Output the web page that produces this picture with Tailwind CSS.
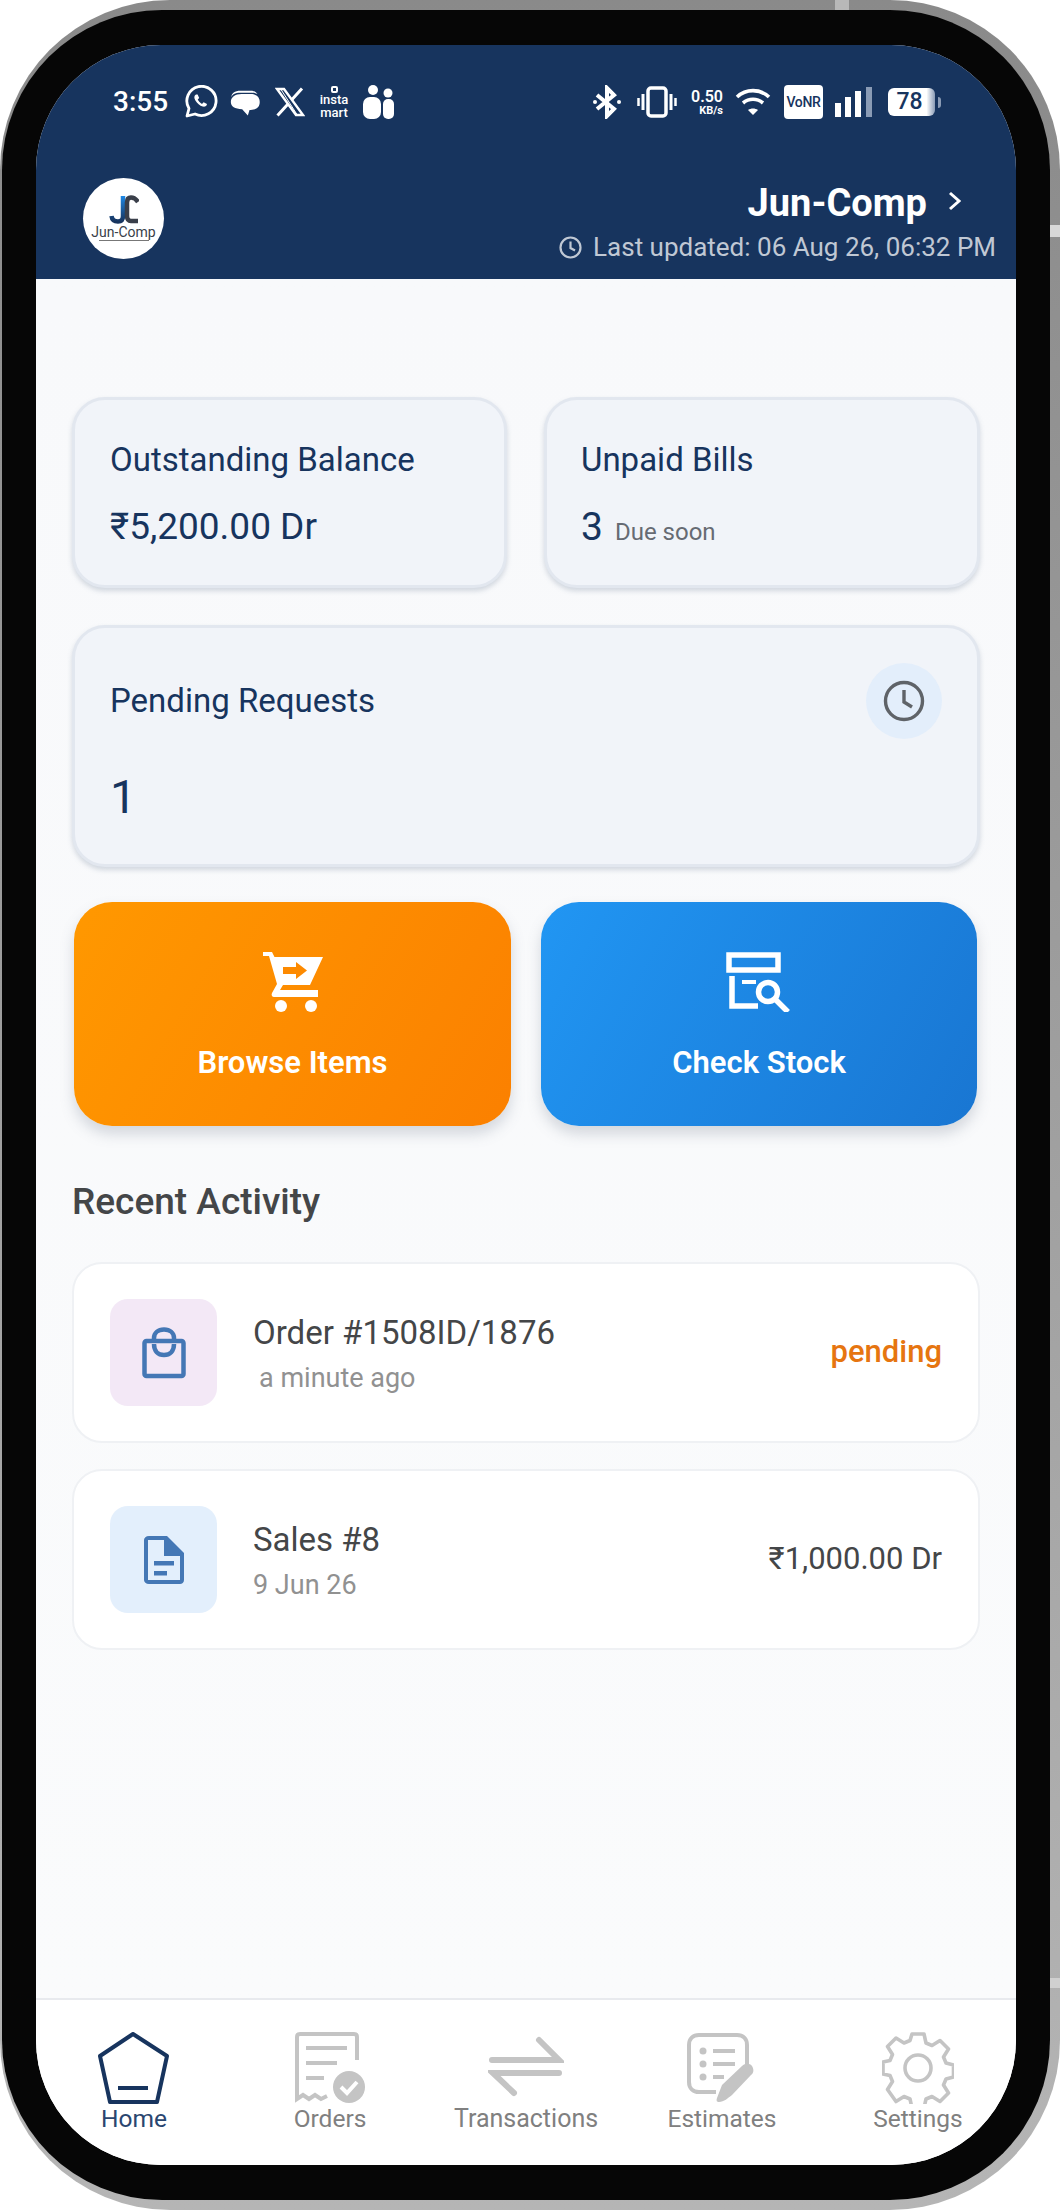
<!DOCTYPE html>
<html lang="en">
<head>
    <meta charset="UTF-8">
    <meta name="viewport" content="width=device-width, initial-scale=1.0">
    <title>Jun-Comp</title>
    <script src="https://cdn.jsdelivr.net/npm/@tailwindcss/browser@4"></script>
</head>
<body class="bg-white font-['Roboto','Noto_Sans',sans-serif]">
    <div class="w-[1060px] h-[2210px] overflow-hidden bg-white">
        <!-- Phone frame -->
        <div class="relative w-[1060px] h-[2210px] rounded-[170px] bg-gradient-to-b from-[#8a8a8a] to-[#b5b5b5] pt-[10px] pr-[10px] pb-[10px] pl-[2px]">
            <span class="absolute top-0 left-[835px] w-[14px] h-[10px] bg-[#b8b8b8]"></span>
            <span class="absolute top-[225px] right-0 w-[10px] h-[12px] bg-[#d8d8d8]"></span>
            <span class="absolute top-[1978px] right-0 w-[10px] h-[10px] bg-[#d0d0d0]"></span>
            <div class="w-full h-full rounded-[160px] bg-[#060606] py-[35px] pl-[34px] pr-[34px]">
                <div class="w-[980px] h-[2120px] rounded-[125px] overflow-hidden bg-[#f8f9fb] flex flex-col">

                    <!-- Header -->
                    <header class="h-[234px] shrink-0 bg-[#17345e] text-white">
                        <div class="pt-[37px] pl-[77px] pr-[75px]">
                            <div class="h-[40px] flex items-center justify-between">
                                <div class="flex items-center">
                                    <span class="text-[28px] font-medium leading-none w-[71px]">3:55</span>
                                    <svg class="w-[34px] h-[34px]" viewBox="0 0 34 34" fill="none" stroke="white" stroke-width="2.8"><path d="M3 31l2-7.500A14.600 14.600 0 1 1 11 29z" stroke-linejoin="round"/><path d="M12 9.500c-2 1-2.200 3.400-.6 6 1.700 2.900 4.500 5.400 7.300 6.100 2.300.5 4-.6 4.300-2.600l-3.400-1.800-1.600 1.700c-1.800-.8-3.400-2.400-4.300-4.300l1.500-1.500-1.600-3.600z" fill="white" stroke="none"/></svg>
                                    <svg class="w-[34px] h-[34px] ml-[10px]" viewBox="0 0 30 30" fill="white"><path d="M3 11c0-4 3-6 8-6h9c3 0 5 1 6 3-1-.8-3-1.200-6-1.200h-9C6 6.800 3.500 8.500 3 11z"/><path d="M12 8h8c5 0 8 2.500 8 7s-3 7-8 7h-1l-1.500 5-5-5.500C6 21 2.500 19 2.500 15S6 8 12 8z"/></svg>
                                    <svg class="w-[30px] h-[30px] ml-[13px]" viewBox="0 0 30 30" fill="none" stroke="white"><path d="M2 2h7l19 26h-7z" stroke-width="2.400"/><path d="M6 2.500l16 25" stroke-width="1"/><path d="M27 1.500L17 12.500M13 17L2.500 28.500" stroke-width="3"/></svg>
                                    <div class="w-[32px] ml-[13px] flex flex-col items-center leading-none">
                                        <span class="w-[7px] h-[7px] border-2 border-white rounded-[2px]"></span>
                                        <span class="text-[13px] leading-[13px] font-medium">insta</span>
                                        <span class="text-[13px] leading-[13px] font-medium">mart</span>
                                    </div>
                                    <svg class="w-[32px] h-[36px] ml-[13px]" viewBox="0 0 32 36" fill="white"><circle cx="10" cy="6" r="5"/><circle cx="25" cy="9" r="4.500"/><rect x="0" y="13" width="18" height="22" rx="7"/><rect x="20" y="15" width="11" height="20" rx="5"/></svg>
                                </div>
                                <div class="flex items-center">
                                    <svg class="w-[30px] h-[34px]" viewBox="0 0 30 34" fill="none" stroke="white" stroke-width="4"><path d="M5 10l17 14-7 7V3l7 7L5 24"/><circle cx="3" cy="17" r="2" fill="white" stroke="none"/><circle cx="27" cy="17" r="2" fill="white" stroke="none"/></svg>
                                    <svg class="w-[40px] h-[32px] ml-[15px]" viewBox="0 0 40 32" fill="none" stroke="white"><rect x="11" y="2" width="18" height="28" rx="3" stroke-width="3.500"/><path d="M6 8v16M34 8v16" stroke-width="3"/><path d="M1.500 12v8M38.500 12v8" stroke-width="2.500"/></svg>
                                    <div class="w-[34px] ml-[12px] flex flex-col items-end leading-none">
                                        <span class="text-[16px] leading-[17px] font-semibold">0.50</span>
                                        <span class="text-[11px] leading-[12px] font-bold">KB/s</span>
                                    </div>
                                    <svg class="w-[36px] h-[28px] ml-[12px]" viewBox="0 0 36 28" fill="none" stroke="white" stroke-width="3.600"><path d="M2 9c9-8.500 23-8.500 32 0"/><path d="M8 15c6-5 14-5 20 0"/><path d="M18 27l-5-5c3-2 7-2 10 0z" fill="white" stroke="none"/></svg>
                                    <span class="ml-[13px] w-[39px] h-[34px] rounded-[4px] bg-white text-[#17345e] text-[14px] font-medium flex items-center justify-center tracking-tight">VoNR</span>
                                    <svg class="w-[37px] h-[30px] ml-[12px]" viewBox="0 0 37 30"><rect x="0" y="16" width="6" height="14" fill="white"/><rect x="10" y="10" width="6" height="20" fill="white"/><rect x="20" y="4" width="6" height="26" fill="white"/><rect x="31" y="0" width="6" height="30" fill="#8a9bb5"/></svg>
                                    <div class="ml-[16px] flex items-center">
                                        <span class="w-[47px] h-[28px] rounded-[6px] bg-gradient-to-r from-white from-[82%] to-[#8a9bb5] text-[#17345e] text-[23px] font-medium flex items-center justify-center pr-[4px]">78</span>
                                        <span class="ml-[3px] w-[3px] h-[11px] rounded-r-sm bg-[#8a9bb5]"></span>
                                    </div>
                                </div>
                            </div>
                        </div>
                        <div class="mt-[56px] pl-[47px] pr-[20px] flex justify-between items-start">
                            <div class="w-[81px] h-[81px] rounded-full bg-white flex flex-col items-center pt-[17px]">
                                <svg class="w-[30px] h-[29px]" viewBox="0 0 30 29" fill="none" stroke-width="4.500">
                                    <defs>
                                        <linearGradient id="jGrad" x1="0" y1="0" x2="0" y2="1">
                                            <stop offset="0" stop-color="#1e88e5"/>
                                            <stop offset="1" stop-color="#17345e"/>
                                        </linearGradient>
                                    </defs>
                                    <path d="M14 1v20c0 4-2 5.500-5 5.500S3 25 2.500 21" stroke="url(#jGrad)"/>
                                    <path d="M29 7c-2-3-4-4.500-7-4.500-3 0-4 2-4 5v13c0 3 1 5.500 4 5.500h7" stroke="#3a3f4a"/>
                                </svg>
                                <span class="text-[14px] leading-[14px] text-[#3a3f4a] mt-[1px]">Jun-Comp</span>
                                <span class="w-[50px] h-[1px] bg-[#777] mt-[1px]"></span>
                            </div>
                            <div class="flex flex-col items-end pt-[3px]">
                                <div class="flex items-center h-[44px] pr-[34px]">
                                    <span class="text-[38px] font-bold leading-[44px]">Jun-Comp</span>
                                    <svg class="w-[14px] h-[20px] ml-[21px] -mt-[4px]" viewBox="0 0 14 20" fill="none" stroke="white" stroke-width="3"><path d="M2 2l9 8-9 8"/></svg>
                                </div>
                                <div class="flex items-center mt-[7px] text-[#c0c8d4]">
                                    <svg class="w-[23px] h-[23px] mr-[11px]" viewBox="0 0 23 23" fill="none" stroke="#c0c8d4" stroke-width="2.200"><circle cx="11.500" cy="11.500" r="10"/><path d="M11.500 5.500v6.500l4.500 2.500"/></svg>
                                    <span class="text-[26px] leading-[30px]">Last updated: 06 Aug 26, 06:32 PM</span>
                                </div>
                            </div>
                        </div>
                    </header>

                    <!-- Main -->
                    <main class="flex-1 px-[36px] pt-[118px] bg-gradient-to-b from-[#f8f9fb] to-[#fafbfc]">
                        <div class="grid grid-cols-[435px_436px] gap-[37px]">
                            <div class="h-[191px] rounded-[33px] bg-[#f1f4f9] border-[3px] border-[#e2e7ef] shadow-[0_3px_5px_rgba(120,135,160,0.3)] pl-[35px] pt-[41px]">
                                <p class="text-[33px] leading-[38px] text-[#17345e]">Outstanding Balance</p>
                                <p class="text-[37px] leading-[44px] mt-[26px] text-[#17345e]">₹5,200.00 Dr</p>
                            </div>
                            <div class="h-[191px] rounded-[33px] bg-[#f1f4f9] border-[3px] border-[#e2e7ef] shadow-[0_3px_5px_rgba(120,135,160,0.3)] pl-[34px] pt-[41px]">
                                <p class="text-[33px] leading-[38px] text-[#17345e]">Unpaid Bills</p>
                                <p class="h-[44px] mt-[26px] flex items-baseline">
                                    <span class="text-[39px] leading-[44px] text-[#17345e]">3</span>
                                    <span class="text-[24px] ml-[12px] text-[#666b73]">Due soon</span>
                                </p>
                            </div>
                        </div>
                        <div class="h-[242px] mt-[37px] rounded-[33px] bg-[#f1f4f9] border-[3px] border-[#e2e7ef] shadow-[0_3px_5px_rgba(120,135,160,0.3)] pl-[35px] pr-[35px] pt-[35px]">
                            <div class="flex items-center justify-between h-[76px]">
                                <p class="text-[33px] leading-[38px] text-[#17345e]">Pending Requests</p>
                                <div class="w-[76px] h-[76px] rounded-full bg-[#e3eefb] flex items-center justify-center">
                                    <svg class="w-[42px] h-[42px]" viewBox="0 0 42 42" fill="none" stroke="#5f6368" stroke-width="3.400"><circle cx="21" cy="21" r="18.500"/><path d="M21 10v12l8 5"/></svg>
                                </div>
                            </div>
                            <p class="text-[47px] leading-[48px] mt-[34px] text-[#17345e]">1</p>
                        </div>

                        <!-- Quick actions -->
                        <div class="ml-[2px] mt-[35px] grid grid-cols-[437px_436px] gap-[30px]">
                            <button class="h-[224px] rounded-[38px] bg-linear-120 from-[#ff9800] to-[#fb8000] shadow-[0_8px_14px_rgba(100,110,130,0.25)] text-white flex flex-col items-center pt-[50px]">
                                <svg class="w-[60px] h-[60px]" viewBox="0 0 60 60"><path d="M0 0h9l2.500 5H60L47 33H20l-3 5h38v7H11c-2 0-3-2-2-4l5-9L6 4H0z" fill="white"/><path d="M20 15h13v-5l11 8.500L33 27v-5H20z" fill="#fd8a00"/><circle cx="18" cy="54" r="6" fill="white"/><circle cx="48" cy="54" r="6" fill="white"/></svg>
                                <span class="text-[31px] font-semibold leading-[34px] mt-[34px]">Browse Items</span>
                            </button>
                            <button class="h-[224px] rounded-[38px] bg-linear-120 from-[#2196f3] to-[#1976d2] shadow-[0_8px_14px_rgba(100,110,130,0.25)] text-white flex flex-col items-center pt-[50px]">
                                <svg class="w-[66px] h-[60px]" viewBox="0 0 66 60" fill="none" stroke="white" stroke-width="5.500"><rect x="3" y="3" width="49" height="15"/><path d="M6 24v30h26"/><path d="M16 30h14" stroke-width="4"/><circle cx="42" cy="40" r="9.500"/><path d="M49 47l13 13"/></svg>
                                <span class="text-[31px] font-semibold leading-[34px] mt-[34px]">Check Stock</span>
                            </button>
                        </div>

                        <!-- Recent activity -->
                        <h2 class="text-[37px] font-medium leading-[40px] text-[#444648] mt-[56px]">Recent Activity</h2>
                        <div class="mt-[40px] h-[181px] rounded-[30px] bg-white border-2 border-[#eff1f4] flex items-center pl-[36px] pr-[36px]">
                            <div class="w-[107px] h-[107px] rounded-[18px] bg-[#f3e8f6] flex items-center justify-center">
                                <svg class="w-[44px] h-[52px]" viewBox="0 0 44 52" fill="none" stroke="#4477b5" stroke-width="4.500"><rect x="2.500" y="14" width="39" height="35" rx="2"/><path d="M12 14V11c0-5 4-8.500 10-8.500S32 6 32 11v3"/><path d="M12 17c0 7 4 11 10 11s10-4 10-11"/></svg>
                            </div>
                            <div class="ml-[36px] flex-1">
                                <p class="text-[33px] leading-[40px] text-[#444648]">Order #1508ID/1876</p>
                                <p class="text-[27px] leading-[30px] mt-[10px] pl-[6px] text-[#919191]">a minute ago</p>
                            </div>
                            <span class="text-[31px] font-medium text-[#e67510]">pending</span>
                        </div>
                        <div class="mt-[26px] h-[181px] rounded-[30px] bg-white border-2 border-[#eff1f4] flex items-center pl-[36px] pr-[36px]">
                            <div class="w-[107px] h-[107px] rounded-[18px] bg-[#e3effc] flex items-center justify-center">
                                <svg class="w-[40px] h-[48px]" viewBox="0 0 40 48" fill="#4477b5"><path fill-rule="evenodd" d="M5 0h18l17 17v27c0 2.500-2 4-4 4H5c-3 0-5-2-5-4V4c0-2 2-4 5-4zm-1 4v40h32V20H20V4z"/><rect x="10" y="25" width="20" height="4.500"/><rect x="10" y="35" width="13" height="4.500"/></svg>
                            </div>
                            <div class="ml-[36px] flex-1">
                                <p class="text-[33px] leading-[40px] text-[#444648]">Sales #8</p>
                                <p class="text-[27px] leading-[30px] mt-[10px] text-[#919191]">9 Jun 26</p>
                            </div>
                            <span class="text-[31px] text-[#444648]">₹1,000.00 Dr</span>
                        </div>
                    </main>

                    <!-- Bottom nav -->
                    <nav class="h-[167px] shrink-0 bg-white border-t-2 border-[#e8eaee] grid grid-cols-5 pt-[32px]">
                        <a class="flex flex-col items-center text-[#2a4670]">
                            <svg class="w-[72px] h-[72px]" viewBox="0 0 72 72" fill="none" stroke="#17345e" stroke-width="4" stroke-linejoin="round"><path d="M35 2l34 22-10 46H12L2 24z"/><path d="M20 56h30" stroke-linecap="butt"/></svg>
                            <span class="text-[24.500px] leading-[28px] mt-[1px]">Home</span>
                        </a>
                        <a class="flex flex-col items-center text-[#808080]">
                            <svg class="w-[70px] h-[72px]" viewBox="0 0 70 72" fill="none" stroke="#c4c4c4" stroke-width="4"><path d="M62 28V5c0-2-1-3-3-3H5C3 2 2 3 2 5v62l6-4 6 4 6-4 6 4 6-3" /><path d="M11 16h41M11 31h31M11 46h18" stroke-width="4"/><circle cx="54" cy="55" r="16" fill="#c4c4c4" stroke="none"/><path d="M46 55l6 6 10-11" stroke="white"/></svg>
                            <span class="text-[24.500px] leading-[28px] mt-[1px]">Orders</span>
                        </a>
                        <a class="flex flex-col items-center text-[#808080]">
                            <svg class="w-[76px] h-[72px]" viewBox="0 0 76 72" fill="none" stroke="#c4c4c4" stroke-width="6" stroke-linecap="round"><path d="M4 28h67L51 8"/><path d="M71 41H5l21 20"/></svg>
                            <span class="text-[25px] leading-[28px] mt-[1px]">Transactions</span>
                        </a>
                        <a class="flex flex-col items-center text-[#808080]">
                            <svg class="w-[72px] h-[72px]" viewBox="0 0 72 72" fill="none" stroke="#c4c4c4" stroke-width="4"><path d="M30 60H13C7 60 3 56 3 50V13C3 7 7 3 13 3h38c6 0 10 4 10 10v20"/><circle cx="17" cy="19" r="3.500" fill="#c4c4c4" stroke="none"/><circle cx="17" cy="32" r="3.500" fill="#c4c4c4" stroke="none"/><circle cx="17" cy="45" r="3.500" fill="#c4c4c4" stroke="none"/><path d="M27 19h22M27 32h22M27 45h11"/><path d="M33 70c-2 0-3-1-2-4l5-13 20-19c3-3 8-3 10 0 2 3 2 7-1 9L46 63c-4 3-8 7-13 7z" fill="#c4c4c4" stroke="none"/></svg>
                            <span class="text-[24.500px] leading-[28px] mt-[1px]">Estimates</span>
                        </a>
                        <a class="flex flex-col items-center text-[#808080]">
                            <svg class="w-[72px] h-[72px]" viewBox="0 0 72 72" fill="none" stroke="#c4c4c4" stroke-width="3.600" stroke-linejoin="round"><circle cx="36" cy="36" r="13"/><path d="M30 2h12l2 9 6 2.500 8-5 8.500 8.500-5 8 2.500 6 7.500 2v12l-7.500 2-2.500 6 5 8-8.500 8.500-8-5-6 2.500-2 9H30l-2-9-6-2.500-8 5L5.500 57.500l5-8L8 43.500 1 42V30l7-1.500 2.500-6-5-8L14 6l8 5 6-2.500z"/></svg>
                            <span class="text-[24.500px] leading-[28px] mt-[1px]">Settings</span>
                        </a>
                    </nav>
                </div>
            </div>
        </div>
    </div>
</body>
</html>
